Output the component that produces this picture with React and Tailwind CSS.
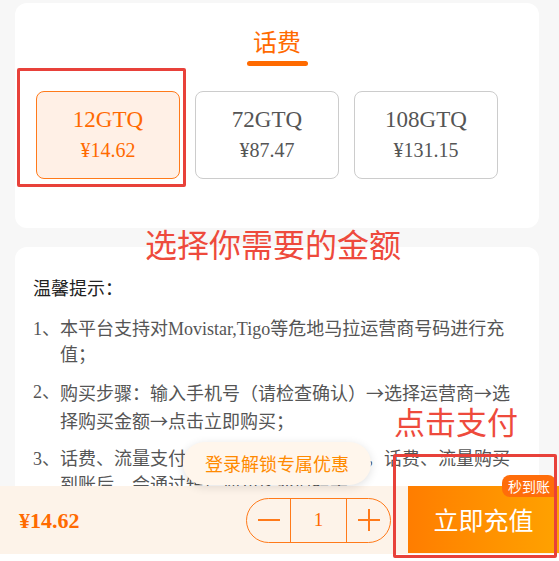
import React from "react";

const serif = "font-['Liberation_Serif','Noto_Sans_CJK_SC',serif]";
const sans = "font-['Noto_Sans_CJK_SC','Noto_Sans',sans-serif]";

function Option({ amount, price, selected }) {
  return (
    <div
      className={
        "w-[144px] h-[88px] rounded-lg border flex flex-col items-center justify-center " +
        serif +
        (selected
          ? " bg-[#fff0e6] border-[#ff7a1a] text-[#ff6a00]"
          : " bg-white border-[#cccccc] text-[#555555]")
      }
    >
      <div className="text-[23px] leading-[30px]">{amount}</div>
      <div className="text-[20px] leading-[30px]">{price}</div>
    </div>
  );
}

function Item({ n, children }) {
  return (
    <div className="flex">
      <span className="w-[27px] shrink-0 whitespace-nowrap">{n}、</span>
      <span className="flex-1">{children}</span>
    </div>
  );
}

const Arrow = () => <span className={sans}>→</span>;

export default function App() {
  return (
    <div className="relative w-[559px] h-[561px] overflow-hidden bg-white flex flex-col">
      <div className="flex-1 bg-[#f7f7f7] overflow-hidden pt-[3px]">
        {/* Card 1 */}
        <div className="ml-[15px] w-[524px] h-[225px] bg-white rounded-xl flex flex-col items-center pt-[23px]">
          <div className={"text-[24px] leading-[30px] text-[#ff6a00] " + sans}>话费</div>
          <div className="mt-[5px] w-[61px] h-[5px] rounded-full bg-[#ff6a00]" />
          <div className="mt-[25px] self-stretch pl-[21px] flex gap-[15px]">
            <Option amount="12GTQ" price="¥14.62" selected />
            <Option amount="72GTQ" price="¥87.47" />
            <Option amount="108GTQ" price="¥131.15" />
          </div>
        </div>
        {/* Card 2 */}
        <div className="mt-[19px] ml-[15px] w-[524px] h-[400px] bg-white rounded-xl px-[18px]">
          <div className={"pt-[27px] text-[18px] leading-[26px] text-[#222222] " + sans}>温馨提示：</div>
          <div className={"mt-[16px] flex flex-col gap-[11px] text-[18px] leading-[26px] text-[#555555] " + serif}>
            <Item n="1">本平台支持对Movistar,Tigo等危地马拉运营商号码进行充值；</Item>
            <Item n="2">
              购买步骤：输入手机号（请检查确认）<Arrow />选择运营商<Arrow />选择购买金额<Arrow />点击立即购买；
            </Item>
            <Item n="3">话费、流量支付成功后，充值到您账号，话费、流量购买到账后，会通过短信通知您充值结果。</Item>
          </div>
        </div>
      </div>

      {/* Bottom bar */}
      <div className="h-[68px] shrink-0 bg-[#fdf3e9] flex items-center">
        <div className={"ml-[19px] w-[70px] text-[22px] font-bold text-[#ff6a00] " + serif}>¥14.62</div>
        <div className="ml-[157px] w-[145px] h-[45px] rounded-full border border-[#ff7a1a] flex items-stretch">
          <div className="w-[43px] flex items-center justify-center">
            <div className="w-[22px] h-[2px] bg-[#ff7a1a]" />
          </div>
          <div className={"flex-1 border-x border-[#ff7a1a] flex items-center justify-center text-[19px] text-[#ff6a00] " + serif}>1</div>
          <div className="w-[43px] flex items-center justify-center relative">
            <div className="w-[22px] h-[2px] bg-[#ff7a1a]" />
            <div className="absolute w-[2px] h-[22px] bg-[#ff7a1a]" />
          </div>
        </div>
        <div className={"ml-[17px] self-stretch mb-[1px] flex-1 bg-gradient-to-r from-[#ff7d00] to-[#ffa200] flex items-center justify-center text-white text-[25px] " + sans}>
          立即充值
        </div>
      </div>
      <div className="h-[7px] shrink-0 bg-white" />

      {/* Overlays */}
      <div className={"absolute left-[502px] top-[475px] w-[54px] h-[22px] rounded-tl-lg rounded-tr-lg rounded-bl-lg bg-[#ff6d0a] text-white text-[14px] leading-[22px] text-center " + sans}>
        秒到账
      </div>
      <div className="absolute left-[183px] top-[442px] w-[188px] h-[43px] rounded-full bg-[#fff6ec] shadow-[0_2px_10px_rgba(0,0,0,0.12)] flex items-center justify-center">
        <span className={"text-[18px] text-[#ff8a00] " + sans}>登录解锁专属优惠</span>
      </div>
      <div className="absolute left-[17px] top-[68px] w-[169px] h-[119px] border-[3px] border-[#e8413a] rounded-[2px]" />
      <div className="absolute left-[393px] top-[454px] w-[164px] h-[104px] border-[3px] border-[#e8413a] rounded-[2px]" />
      <div className={"absolute left-[145px] top-[225px] text-[32px] leading-[36px] text-[#ee4a3c] whitespace-nowrap " + sans}>选择你需要的金额</div>
      <div className={"absolute left-[394px] top-[403px] text-[31px] leading-[36px] text-[#ee4a3c] whitespace-nowrap " + sans}>点击支付</div>
    </div>
  );
}
